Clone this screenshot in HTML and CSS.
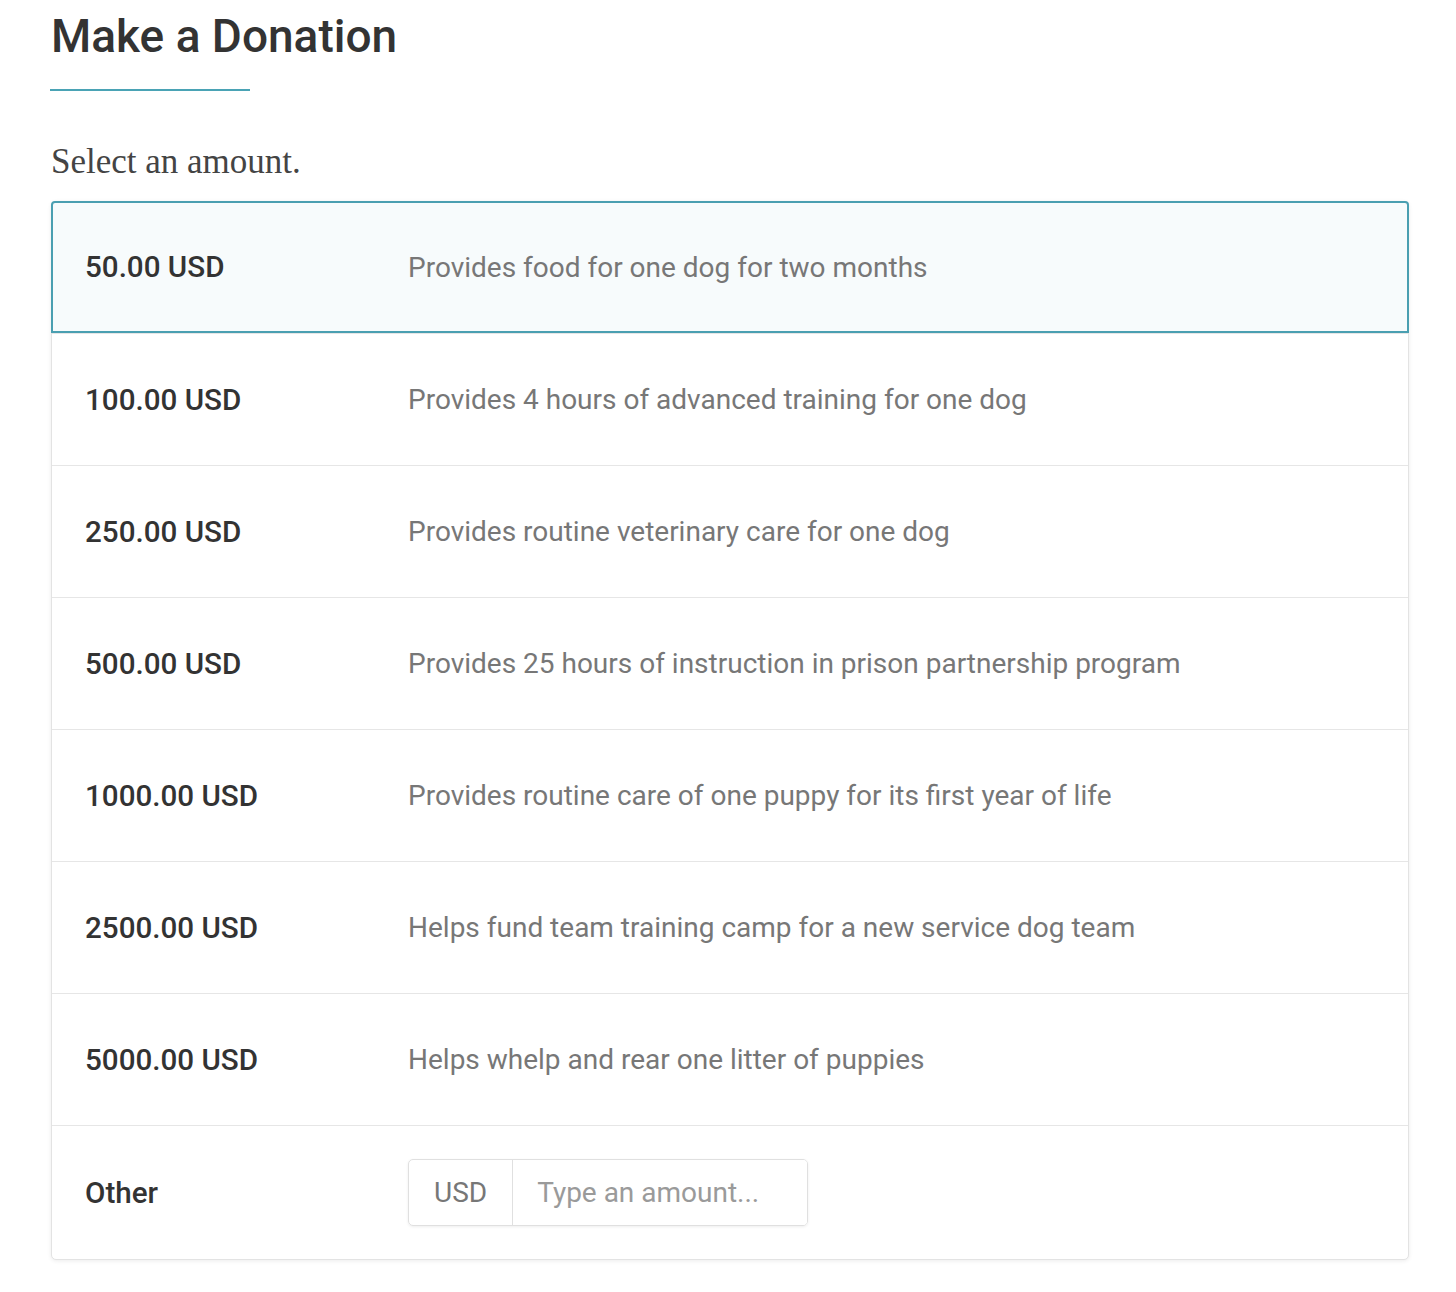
FILE: index.html
```html
<!DOCTYPE html>
<html lang="en">
<head>
<meta charset="utf-8">
<title>Make a Donation</title>
<link rel="stylesheet" href="styles.css">
</head>
<body>
<main class="page">
  <h1 class="title">Make a Donation</h1>
  <div class="title-rule"></div>
  <p class="lead">Select an amount.</p>
  <div class="card">
    <div class="row selected"><div class="amount">50.00 USD</div><div class="desc">Provides food for one dog for two months</div></div>
    <div class="row"><div class="amount">100.00 USD</div><div class="desc">Provides 4 hours of advanced training for one dog</div></div>
    <div class="row"><div class="amount">250.00 USD</div><div class="desc">Provides routine veterinary care for one dog</div></div>
    <div class="row"><div class="amount">500.00 USD</div><div class="desc">Provides 25 hours of instruction in prison partnership program</div></div>
    <div class="row"><div class="amount">1000.00 USD</div><div class="desc">Provides routine care of one puppy for its first year of life</div></div>
    <div class="row"><div class="amount">2500.00 USD</div><div class="desc">Helps fund team training camp for a new service dog team</div></div>
    <div class="row"><div class="amount">5000.00 USD</div><div class="desc">Helps whelp and rear one litter of puppies</div></div>
    <div class="row other"><div class="amount">Other</div>
      <div class="input-group"><span class="addon">USD</span><input class="amount-input" type="text" placeholder="Type an amount..."></div>
    </div>
  </div>
</main>
</body>
</html>
```
FILE: styles.css
```css
* { box-sizing: border-box; }
html, body { margin: 0; background: #fff; }
body { font-family: Roboto, "Liberation Sans", sans-serif; color: #333; }
.page { padding: 6px 47px 30px 51px; }
.title {
  margin: 0;
  font-size: 46px;
  font-weight: 500;
  line-height: 60px;
  color: #333;
}
.title-rule {
  width: 200px;
  height: 2px;
  background: #4aa3b5;
  margin: 23px 0 0 -1px;
}
.lead {
  margin: 51px 0 0;
  font-family: "Liberation Serif", serif;
  font-size: 35px;
  line-height: 40px;
  color: #444;
}
.card {
  margin-top: 19px;
  border: 1px solid #e3e3e3;
  border-radius: 5px;
  box-shadow: 0 1px 4px rgba(0,0,0,0.08);
  background: #fff;
}
.row {
  display: flex;
  align-items: center;
  height: 132px;
  padding-left: 33px;
  border-top: 1px solid #e6e6e6;
}
.row:first-child { border-top: none; }
.row.selected {
  height: 132px;
  border: 2px solid #4a9fb1;
  border-radius: 4px 4px 0 0;
  background: #f7fbfc;
  margin: -1px -1px 0;
  padding-left: 32px;
}
.amount {
  width: 323px;
  flex: none;
  font-size: 29.6px;
  font-weight: 500;
  color: #333;
}
.desc {
  font-size: 28px;
  color: #777;
}
.row.other { height: 134px; }
.input-group {
  display: flex;
  height: 67px;
  width: 400px;
  border: 1px solid #e0e0e0;
  border-radius: 5px;
  box-shadow: 0 1px 3px rgba(0,0,0,0.07);
  overflow: hidden;
}
.addon {
  display: flex;
  align-items: center;
  padding: 0 25px;
  font-size: 28px;
  color: #777;
  border-right: 1px solid #e0e0e0;
}
.amount-input {
  flex: 1;
  min-width: 0;
  border: none;
  outline: none;
  padding: 0 24px;
  font-family: Roboto, "Liberation Sans", sans-serif;
  font-size: 28px;
  color: #333;
  background: #fff;
}
.amount-input::placeholder { color: #9a9a9a; }
```
